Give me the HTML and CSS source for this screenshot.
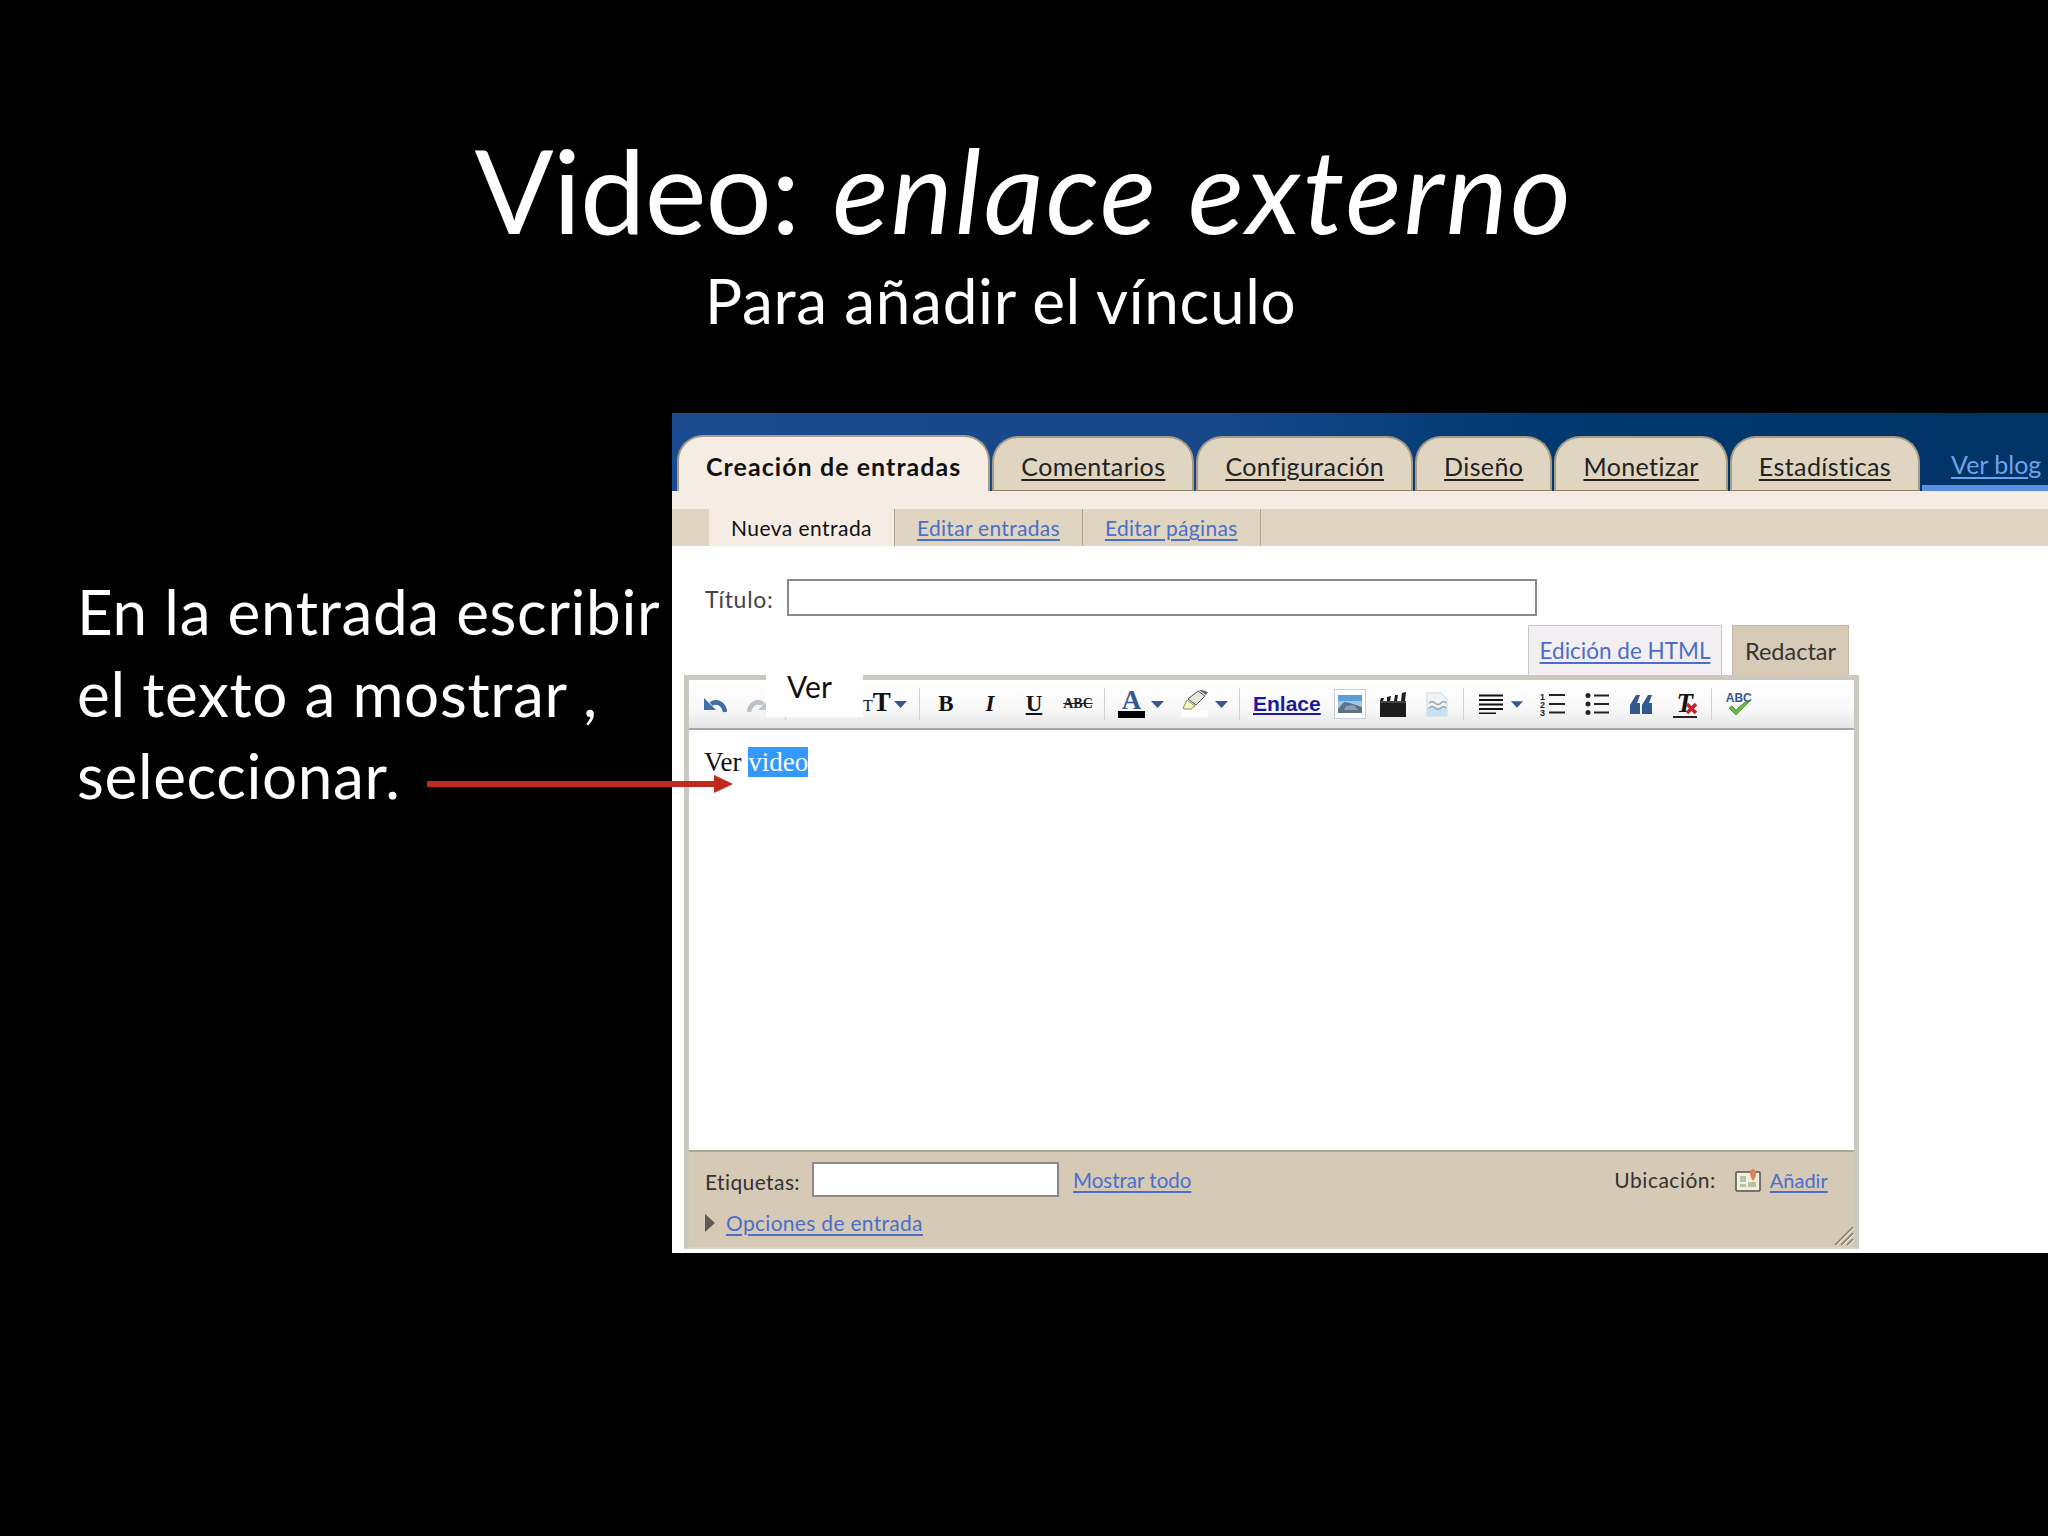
FILE: index.html
```html
<!DOCTYPE html>
<html lang="es">
<head>
    <meta charset="UTF-8">
    <title>Video: enlace externo</title>
    <link rel="stylesheet" href="styles.css">
</head>
<body>
    <div class="slide">
        <div class="heading">
            <h1>Video: <em>enlace externo</em></h1>
            <h2>Para añadir el vínculo</h2>
        </div>

        <div class="content">
            <p class="steps">En la entrada escribir<br>el texto a mostrar ,<br>seleccionar.</p>

            <div class="shot">
                <div class="topbar">
                    <a class="tab active">Creación de entradas</a>
                    <a class="tab">Comentarios</a>
                    <a class="tab">Configuración</a>
                    <a class="tab">Diseño</a>
                    <a class="tab">Monetizar</a>
                    <a class="tab">Estadísticas</a>
                    <div class="viewblog"><a>Ver blog</a></div>
                </div>
                <div class="cream"></div>
                <div class="subtabs">
                    <span class="subtab current">Nueva entrada</span>
                    <a class="subtab">Editar entradas</a>
                    <a class="subtab">Editar páginas</a>
                </div>

                <div class="title-row">
                    <label>Título:</label>
                    <div class="title-input"></div>
                </div>

                <div class="modes">
                    <a class="mode html">Edición de HTML</a>
                    <span class="mode compose">Redactar</span>
                </div>

                <div class="editor">
                    <div class="toolbar">
                        <span class="btn">
                            <svg width="24" height="18" viewBox="0 0 24 18"><path d="M22 17C21 9 14 5 8 9" fill="none" stroke="#3d6ea6" stroke-width="4.5"/><path d="M1 3V15H13Z" fill="#3d6ea6"/></svg>
                        </span>
                        <span class="btn">
                            <svg width="24" height="18" viewBox="0 0 24 18"><path d="M2 17C3 9 10 5 16 9" fill="none" stroke="#b9c1c9" stroke-width="4.5"/><path d="M23 3V15H11Z" fill="#b9c1c9"/></svg>
                        </span>
                        <span class="sep"></span>
                        <span class="font-btn"></span>
                        <span class="drop drop-size">
                            <span class="tt"><small>T</small>T</span>
                            <svg class="caret" width="13" height="7" viewBox="0 0 13 7"><path d="M0 0H13L6.5 7Z"/></svg>
                        </span>
                        <span class="sep"></span>
                        <span class="btn glyph">B</span>
                        <span class="btn glyph italic">I</span>
                        <span class="btn glyph under">U</span>
                        <span class="btn strike">ABC</span>
                        <span class="sep"></span>
                        <span class="drop drop-color">
                            <span class="swatch"><b>A</b><i class="bar black"></i></span>
                            <svg class="caret" width="13" height="7" viewBox="0 0 13 7"><path d="M0 0H13L6.5 7Z"/></svg>
                        </span>
                        <span class="drop drop-mark">
                            <span class="swatch">
                                <svg width="26" height="20" viewBox="0 0 26 20"><path d="M1 18L5 10 13 16 9 19H2Z" fill="#f6f3b4" stroke="#8b8b78"/><path d="M6 9L16 1 23 6 14 15Z" fill="#e8e8e0" stroke="#55554e"/><path d="M17 0L24 5 26 2 20 0Z" fill="#666"/></svg>
                                <i class="bar white"></i>
                            </span>
                            <svg class="caret" width="13" height="7" viewBox="0 0 13 7"><path d="M0 0H13L6.5 7Z"/></svg>
                        </span>
                        <span class="sep"></span>
                        <a class="link-btn">Enlace</a>
                        <span class="img-btn">
                            <svg width="24" height="18" viewBox="0 0 24 18"><rect width="24" height="18" fill="#5aa0d8"/><path d="M0 6H24V18H0Z" fill="#9fc6e6"/><path d="M0 14L6 7 12 8 18 10 24 12V18H0Z" fill="#5b7286"/><path d="M8 11L16 10 20 15H6Z" fill="#8ea0ad"/></svg>
                        </span>
                        <span class="btn">
                            <svg width="26" height="25" viewBox="0 0 26 25"><path d="M0 9H26V25H0Z" fill="#1c1c1c"/><path d="M0 9L1 6H4L3 9ZM7 9L7 5 11 4 10 9ZM14 9L15 3 18 3 17 9ZM21 9L22 1 26 0 25 9Z" fill="#1c1c1c"/><path d="M0 9H26V11H0Z" fill="#444"/></svg>
                        </span>
                        <span class="btn">
                            <svg width="22" height="25" viewBox="0 0 22 25"><path d="M1 1H15L21 7V24H1Z" fill="#eef5fa" stroke="#cfd8df"/><path d="M1 15H21V24H1Z" fill="#c4e2f3"/><path d="M3 11Q6 8 9 11T15 11 20 11M3 16Q6 13 9 16T15 16 20 16" fill="none" stroke="#9aa0a6" stroke-width="1.5"/></svg>
                        </span>
                        <span class="sep"></span>
                        <span class="drop drop-align">
                            <svg width="24" height="20" viewBox="0 0 24 20"><path d="M0 1.5H24M0 6H24M0 10.500H24M0 15H24M0 19.500H17" stroke="#111" stroke-width="2"/></svg>
                            <svg class="caret" width="12" height="7" viewBox="0 0 13 7"><path d="M0 0H13L6.5 7Z"/></svg>
                        </span>
                        <span class="btn">
                            <svg width="25" height="25" viewBox="0 0 25 25">
                                <text x="0" y="8" class="num">1</text><text x="0" y="16" class="num">2</text><text x="0" y="24" class="num">3</text>
                                <path d="M9 3H25M9 12H25M9 20.500H25" stroke="#222" stroke-width="2"/>
                            </svg>
                        </span>
                        <span class="btn">
                            <svg width="24" height="22" viewBox="0 0 24 22"><path d="M9 2.500H24M9 11H24M9 19.500H24" stroke="#222" stroke-width="2"/><circle cx="3" cy="2.500" r="2.500" fill="#222"/><circle cx="3" cy="11" r="2.500" fill="#222"/><circle cx="3" cy="19.500" r="2.500" fill="#222"/></svg>
                        </span>
                        <span class="btn">
                            <svg width="22" height="19" viewBox="0 0 22 19"><path d="M0 19V10L6 0H10L7 8H10V19ZM12 19V10L18 0H22L19 8H22V19Z" fill="#32588f"/></svg>
                        </span>
                        <span class="btn clear">
                            <span class="clear-t">T</span>
                            <svg class="clear-x" width="13" height="13" viewBox="0 0 13 13"><path d="M2 2L11 11M11 2L2 11" stroke="#c8211c" stroke-width="3.500"/></svg>
                        </span>
                        <span class="sep"></span>
                        <span class="btn spell">
                            <span class="spell-abc">ABC</span>
                            <svg class="spell-check" width="22" height="15" viewBox="0 0 22 15"><path d="M1 7L8 14 21 1 17 1 8 9 4 5Z" fill="#69b944" stroke="#4f8f33" stroke-width=".8"/></svg>
                        </span>
                    </div>
                    <div class="body-text">Ver <span class="selected">video</span></div>
                    <div class="bottom">
                        <div class="tags-row">
                            <label>Etiquetas:</label>
                            <div class="tags-input"></div>
                            <a>Mostrar todo</a>
                            <label class="place">Ubicación:</label>
                            <svg class="map" width="26" height="24" viewBox="0 0 26 24"><rect x="1" y="4" width="24" height="19" rx="1" fill="#f2efe2" stroke="#55524c" stroke-width="1.500"/><path d="M5 8H11V14H5ZM5 16H11V19H5ZM13 14H21V19H13Z" fill="#b8c2a0"/><path d="M18 13C14 8 14 1 18 1S22 8 18 13Z" fill="#df7f5c"/></svg>
                            <a class="add">Añadir</a>
                        </div>
                        <div class="options-row">
                            <svg width="10" height="18" viewBox="0 0 10 18"><path d="M0 0L10 9 0 18Z" fill="#5f5a55"/></svg>
                            <a>Opciones de entrada</a>
                        </div>
                        <svg class="grip" width="20" height="20" viewBox="0 0 20 20"><path d="M1 19L19 1M7 19L19 7M13 19L19 13" stroke="#7f7a70" stroke-width="1.500"/><path d="M2 20L20 2M8 20L20 8M14 20L20 14" stroke="#f4efe6" stroke-width="1"/></svg>
                    </div>
                </div>

                <div class="ver-box">Ver</div>
            </div>

            <svg class="arrow" width="306" height="18" viewBox="0 0 306 18"><path d="M0 9H289" stroke="#c0291d" stroke-width="6"/><path d="M287 0L306 9 287 18Z" fill="#c0291d"/></svg>
        </div>
    </div>
</body>
</html>
```

FILE: styles.css
```css
html, body {
    margin: 0;
    padding: 0;
    background-color: #000;
}

.slide {
    width: 2048px;
    height: 1536px;
    overflow: hidden;
    font-family: Lato, "Open Sans", sans-serif;
    color: #fff;
}

.heading {
    height: 413px;
}

h1 {
    margin: 0;
    padding-top: 118px;
    font-size: 117px;
    line-height: 142px;
    font-weight: 400;
    letter-spacing: -.9px;
    text-align: center;
}

h1 em {
    margin-left: 4px;
    letter-spacing: 2.300px;
}

h2 {
    margin: 0;
    padding-left: 705px;
    font-size: 62px;
    line-height: 80px;
    font-weight: 400;
    letter-spacing: .7px;
}

.content {
    position: relative;
    display: flex;
    align-items: flex-start;
}

.steps {
    width: 595px;
    margin: 157px 0 0;
    padding-left: 77px;
    font-size: 62px;
    line-height: 82px;
    letter-spacing: .65px;
}

/* screenshot of the blog editor */
.shot {
    position: relative;
    width: 1376px;
    height: 840px;
    background-color: #fff;
    overflow: hidden;
    font-family: Lato, "Noto Sans", sans-serif;
    font-size: 23px;
    color: #333;
}

.shot a {
    color: #4a6fc9;
    text-decoration: underline;
    text-underline-offset: 3px;
}

.topbar {
    display: flex;
    align-items: flex-end;
    gap: 2px;
    height: 78px;
    padding-left: 5px;
    box-sizing: border-box;
    background: linear-gradient(90deg, #1a4a90 0%, #164789 40%, #003a70 62%, #003366 100%);
    white-space: nowrap;
}

.tab {
    display: block;
    height: 55px;
    padding: 0 27px;
    line-height: 56px;
    font-size: 25px;
    letter-spacing: .4px;
    box-sizing: border-box;
    background-color: #e0d5c0;
    border: 2px solid #a89a84;
    border-bottom: 1px solid #8d7f6a;
    border-radius: 26px 26px 0 0;
}

.shot .tab {
    color: #222;
}

.shot .tab.active {
    height: 56px;
    padding: 0 27px;
    line-height: 58px;
    font-weight: 700;
    letter-spacing: 1.050px;
    text-decoration: none;
    color: #111;
    background-color: #f5ede4;
    border-bottom: none;
}

.viewblog {
    flex: 1;
    height: 55px;
    padding-left: 29px;
    line-height: 56px;
    font-size: 25px;
    box-sizing: border-box;
    border-bottom: 6px solid #5b8de0;
}

.shot .viewblog a {
    color: #6ea2ec;
}

.cream {
    height: 18px;
    background-color: #f5ede4;
}

.subtabs {
    display: flex;
    height: 37px;
    padding-left: 37px;
    background-color: #e0d5c0;
    font-size: 21px;
    line-height: 38px;
    letter-spacing: .3px;
}

.subtab {
    padding: 0 22px;
    border-right: 1px solid #b0a28c;
}

.subtab.current {
    background-color: #f5ede4;
    letter-spacing: .45px;
    color: #111;
}

.title-row {
    display: flex;
    align-items: center;
    height: 37px;
    margin: 33px 0 0 33px;
}

.title-row label {
    width: 82px;
    padding-top: 2px;
    font-size: 23px;
    letter-spacing: .7px;
    color: #444;
}

.title-input {
    width: 750px;
    height: 37px;
    box-sizing: border-box;
    background-color: #fff;
    border: 2px solid #8a8a8a;
}

.modes {
    display: flex;
    align-items: flex-start;
    gap: 10px;
    height: 50px;
    margin: 9px 0 0 856px;
}

.mode {
    height: 51px;
    box-sizing: border-box;
    line-height: 50px;
    text-align: center;
}

.mode.html {
    width: 194px;
    font-size: 22.500px;
    background-color: #f2eef2;
    border: 1px solid #c8c8c8;
    border-bottom: none;
}

.mode.compose {
    width: 117px;
    font-size: 23.500px;
    background-color: #d7cab7;
    border: 1px solid #c4b8a4;
    border-bottom: none;
}

.editor {
    position: relative;
    width: 1175px;
    margin-left: 12px;
    box-sizing: border-box;
    border: 5px solid #cbc9bf;
    border-bottom: 2px solid #d8d4c8;
}

.toolbar {
    display: flex;
    align-items: center;
    height: 50px;
    padding-left: 4px;
    box-sizing: border-box;
    background: linear-gradient(#ffffff, #f8f8f8 60%, #e6e6e6);
    border-bottom: 2px solid #a8a8a8;
}

.btn {
    position: relative;
    display: flex;
    align-items: center;
    justify-content: center;
    width: 44px;
    height: 40px;
    flex-shrink: 0;
}

.sep {
    width: 1px;
    height: 32px;
    margin: 0 4px;
    flex-shrink: 0;
    background-color: #d0d0d0;
}

.font-btn {
    width: 69px;
}

.drop {
    display: flex;
    align-items: center;
    box-sizing: border-box;
    flex-shrink: 0;
}

.caret {
    fill: #32588f;
    flex-shrink: 0;
}

.drop-size {
    width: 56px;
    padding-left: 4px;
    gap: 7px;
}

.drop-color {
    width: 61px;
    padding-left: 9px;
    gap: 6px;
}

.drop-mark {
    width: 65px;
    padding-left: 11px;
    gap: 7px;
}

.drop-align {
    width: 63px;
    padding-left: 11px;
    gap: 8px;
}

.tt {
    width: 24px;
    font-family: "Liberation Serif", serif;
    font-size: 27px;
    line-height: 30px;
    font-weight: 700;
    color: #111;
    white-space: nowrap;
}

.tt small {
    font-size: 16px;
    font-weight: 400;
}

.glyph {
    font-family: "Liberation Serif", serif;
    font-size: 23px;
    font-weight: 700;
    color: #111;
}

.italic {
    font-style: italic;
}

.under {
    text-decoration: underline;
}

.strike {
    font-family: "Liberation Serif", serif;
    font-size: 14px;
    font-weight: 700;
    color: #222;
    text-decoration: line-through;
}

.swatch {
    display: flex;
    flex-direction: column;
    align-items: center;
    width: 27px;
    height: 29px;
}

.swatch b {
    height: 21px;
    font-family: "Liberation Serif", serif;
    font-size: 27px;
    line-height: 21px;
    font-weight: 700;
    color: #32588f;
}

.swatch svg {
    flex-shrink: 0;
}

.bar {
    display: block;
    width: 27px;
    height: 7px;
    flex-shrink: 0;
}

.bar.black {
    background-color: #000;
}

.bar.white {
    background-color: #fff;
}

.shot a.link-btn {
    margin-left: 9px;
    font-family: "Liberation Sans", sans-serif;
    font-size: 21px;
    font-weight: 700;
    color: #1a1a9c;
    text-underline-offset: 2px;
}

.img-btn {
    display: flex;
    align-items: center;
    justify-content: center;
    width: 32px;
    height: 30px;
    margin: 0 5px 0 13px;
    box-sizing: border-box;
    background-color: #fff;
    border: 1px solid #c4cdd8;
    flex-shrink: 0;
}

.num {
    font-family: "Liberation Sans", sans-serif;
    font-size: 9px;
    font-weight: 700;
    fill: #222;
}

.clear-t {
    width: 24px;
    font-family: "Liberation Serif", serif;
    font-size: 27px;
    line-height: 25px;
    font-weight: 700;
    font-style: italic;
    text-align: center;
    color: #111;
    border-bottom: 2px solid #222;
}

.clear-x {
    position: absolute;
    left: 22px;
    top: 18px;
}

.spell-abc {
    position: absolute;
    left: 10px;
    top: 7px;
    font-family: "Liberation Sans", sans-serif;
    font-size: 12px;
    font-weight: 700;
    color: #32588f;
}

.spell-check {
    position: absolute;
    left: 12px;
    top: 17px;
}

.body-text {
    height: 422px;
    padding: 17px 0 0 15px;
    box-sizing: border-box;
    font-family: "Liberation Serif", serif;
    font-size: 27px;
    line-height: 31px;
    color: #111;
    border-bottom: 2px solid #aca89c;
}

.selected {
    background-color: #3399ff;
    color: #fff;
}

.bottom {
    position: relative;
    height: 95px;
    padding: 10px 0 0 16px;
    box-sizing: border-box;
    background-color: #d6c9b6;
    font-size: 21px;
}

.tags-row {
    display: flex;
    align-items: center;
    height: 35px;
}

.tags-row label {
    width: 107px;
    padding-top: 3px;
    letter-spacing: .4px;
}

.tags-input {
    width: 247px;
    height: 35px;
    margin-right: 14px;
    box-sizing: border-box;
    background-color: #fff;
    border: 2px solid #8d8a82;
}

.tags-row a {
    font-size: 20.500px;
}

.tags-row label.place {
    width: auto;
    margin-left: 423px;
    padding-top: 0;
    letter-spacing: .5px;
}

.map {
    margin: 0 9px 0 19px;
}

.tags-row a.add {
    font-size: 20px;
}

.options-row {
    display: flex;
    align-items: center;
    gap: 11px;
    margin-top: 13px;
    letter-spacing: .3px;
}

.grip {
    position: absolute;
    right: 0;
    bottom: 1px;
}

.ver-box {
    position: absolute;
    left: 94px;
    top: 262px;
    width: 97px;
    height: 42px;
    padding-left: 21px;
    box-sizing: border-box;
    background-color: #fff;
    font-family: Lato, sans-serif;
    font-size: 30px;
    line-height: 23px;
    color: #111;
}

.arrow {
    position: absolute;
    left: 427px;
    top: 362px;
}
```
